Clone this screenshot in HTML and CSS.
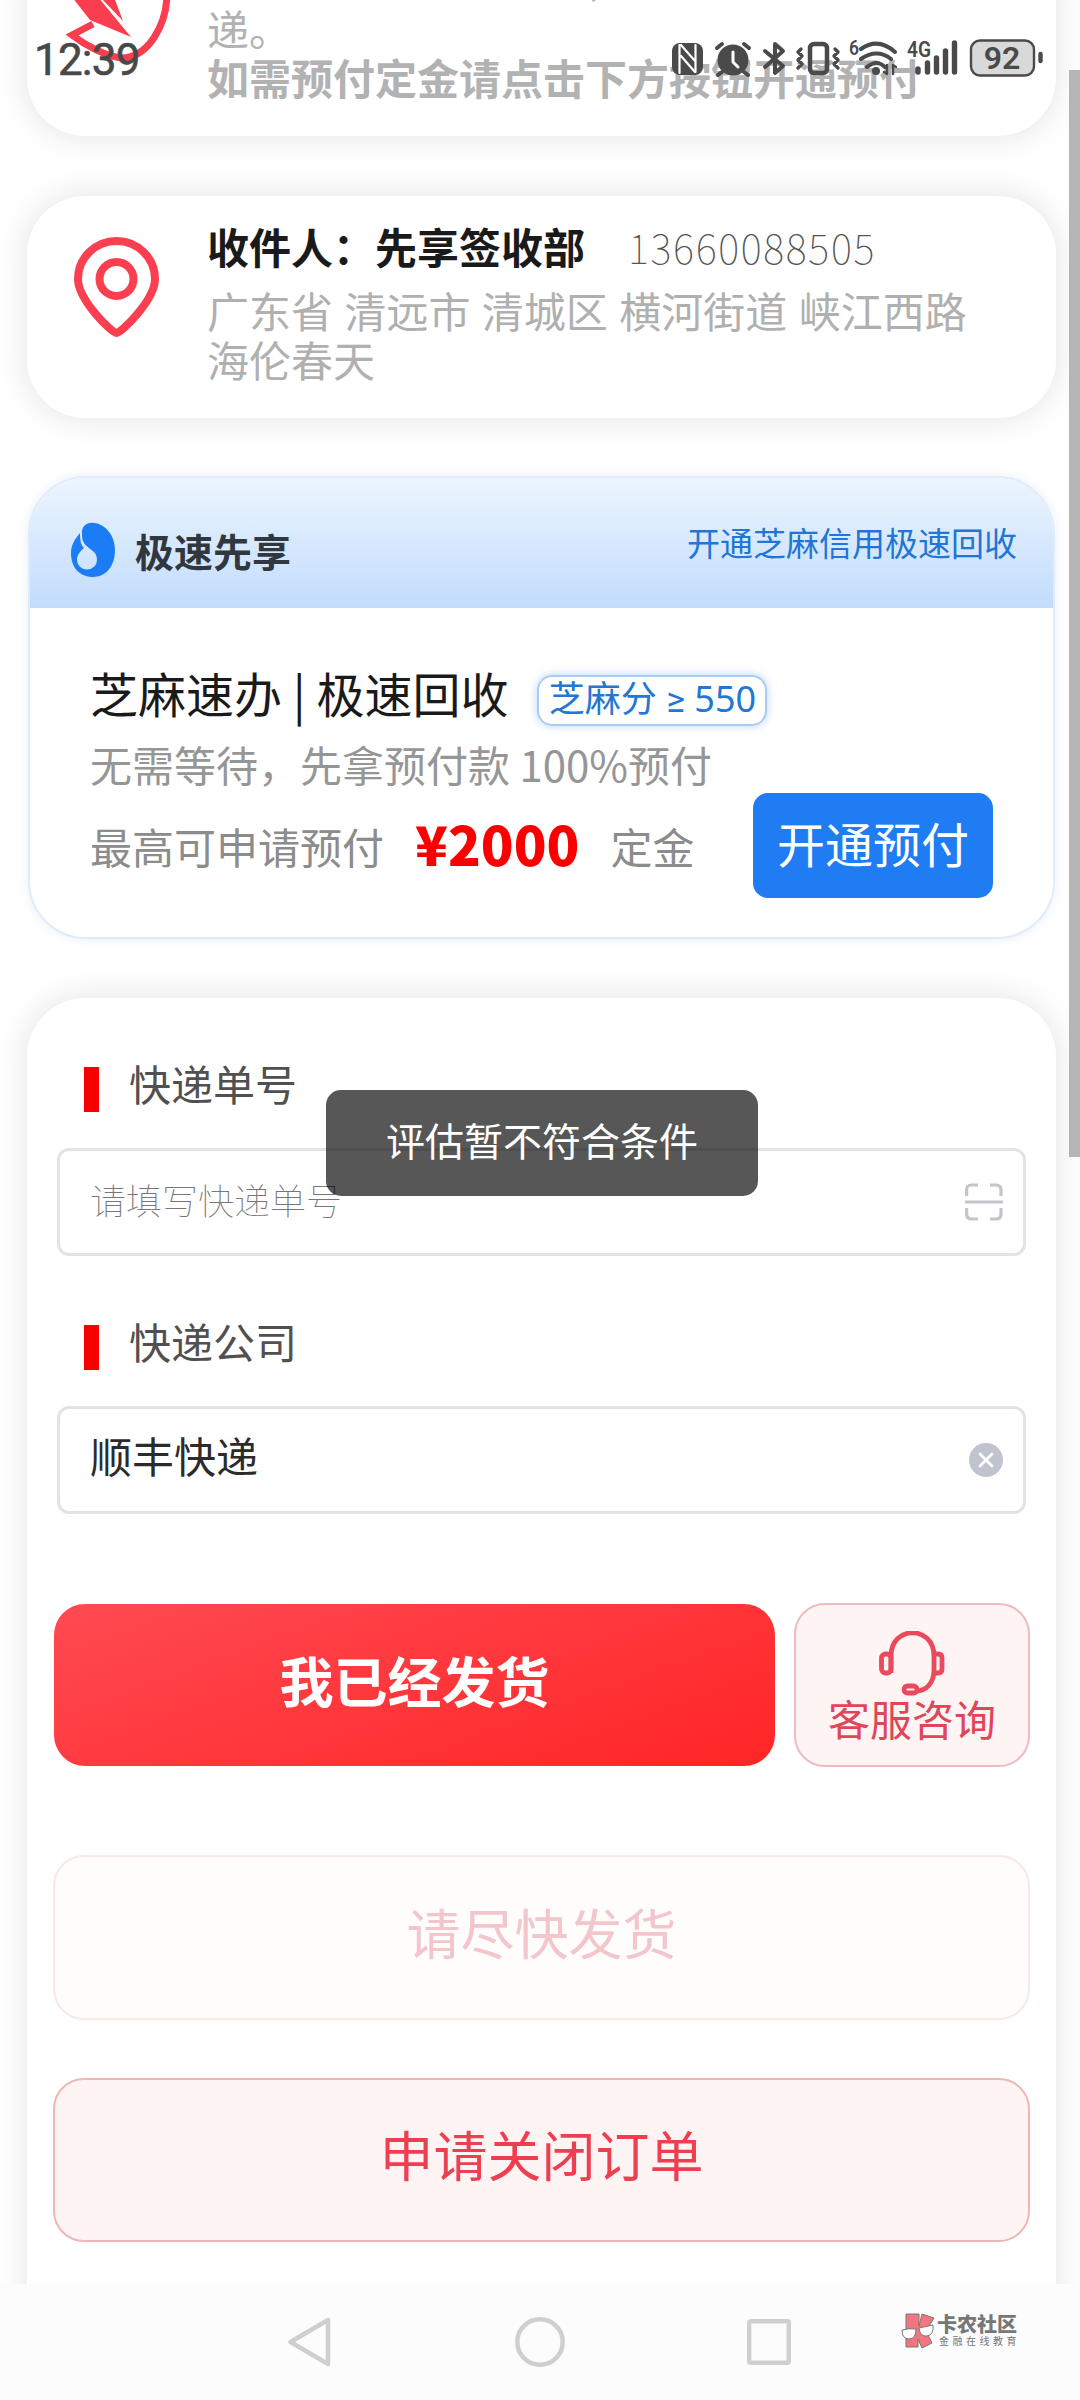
FILE: index.html
```html
<!DOCTYPE html>
<html lang="zh-CN">
<head>
<meta charset="utf-8">
<title>订单发货</title>
<link rel="stylesheet" href="styles.css">
</head>
<body>
<div class="screen">
  <header class="status">
    <span class="clock">12:39</span>
    <svg class="status-icons" width="372" height="44" viewBox="0 0 372 44" fill="none" stroke="#4a4a4a" stroke-width="4" stroke-linecap="round" stroke-linejoin="round">
      <rect x="1" y="7" width="31" height="32" rx="8" fill="#4a4a4a" stroke="none"/>
      <path d="M8.500 37V9M10 20l14 16M10 9l14 16M24.500 9v27" stroke="#fff" stroke-width="2.2"/>
      <circle cx="62" cy="24" r="15.500" fill="#4a4a4a" stroke="none"/>
      <path d="M62 16v10l5 5" stroke="#fff" stroke-width="3"/>
      <path d="M46 12l5-4M78 12l-5-4M51 36l-4 3M73 36l4 3"/>
      <path d="M94 15l18 15-8 7V8l8 7-18 16"/>
      <rect x="139" y="8" width="17" height="29" rx="4" stroke-width="4.5"/>
      <path d="M130 13l-3 3 4 4-4 4 4 4-4 4M164 13l3 3-4 4 4 4-4 4 4 4" stroke-width="3.4"/>
      <path d="M190 13q17-12 34 3M190 23q16-11 30 0M196 31q10-8 18 0" stroke-width="4"/>
      <circle cx="205" cy="35" r="4" fill="#4a4a4a" stroke="none"/>
      <path d="M216 29v9l-3-2M222 38v-9l3 2" stroke-width="2.4"/>
      <path d="M247 33v3M256.500 27v9M265.500 22v14M274.500 15v21M283.500 7v29" stroke-width="5.4"/>
      <rect x="300" y="4.500" width="63" height="35" rx="9" fill="#d9d9d9" stroke-width="2.400"/>
      <path d="M369.500 18v7" stroke-width="4.400"/>
      <g class="status-text">
        <text x="178" y="19" font-size="21" textLength="10" lengthAdjust="spacingAndGlyphs">6</text>
        <text x="236" y="21" font-size="22" textLength="24" lengthAdjust="spacingAndGlyphs">4G</text>
        <text x="331" y="33" font-size="32" text-anchor="middle">92</text>
      </g>
    </svg>
  </header>

  <main class="page">
    <section class="card notice">
      <svg class="notice-icon" width="110" height="66" viewBox="0 0 110 66" fill="none" stroke="#fa3e50" stroke-width="7">
        <path d="M103-4C102 24 85 58 57 58 42 56 22 46 8 35l21-11"/>
        <path d="M8-3h26L67 37 26 20z" fill="#fa3e50" stroke="none"/>
        <path d="M36-3h14l9 24z" fill="#fa3e50" stroke="none"/>
      </svg>
      <div class="notice-text">
        <p class="comma">，</p>
        <p>递。</p>
        <p><strong>如需预付定金请点击下方按钮开通预付</strong></p>
      </div>
    </section>

    <section class="card address">
      <svg class="pin" width="88" height="104" viewBox="0 0 88 104" fill="none" stroke="#fa4050" stroke-width="8">
        <path d="M43.500 97C39 97 5 64 5 43a38.500 38 0 0 1 77 0C82 64 48 97 43.500 97z"/>
        <circle cx="43.500" cy="43" r="17"/>
      </svg>
      <div>
        <p class="receiver"><strong>收件人：先享签收部</strong><span class="phone">13660088505</span></p>
        <p class="street">广东省 清远市 清城区 横河街道 峡江西路<br>海伦春天</p>
      </div>
    </section>

    <section class="credit">
      <div class="credit-head">
        <svg width="46" height="56" viewBox="0 0 46 56">
          <path d="M12 13C11 4 17 0 24 1c12 1 21 13 21 27 0 16-9 27-22 27S1 46 1 31C1 23 5 17 10 11c0 8 1 12 4 15-6 5-7 9-7 12a10 9.500 0 0 0 20 0c0-8-5-9-8-12-5-4-7-7-7-13z" fill="#1b7cf5"/>
        </svg>
        <strong>极速先享</strong>
        <a>开通芝麻信用极速回收</a>
      </div>
      <div class="credit-body">
        <div class="credit-title">芝麻速办 | 极速回收<span class="badge">芝麻分 <span class="gte">≥</span> 550</span></div>
        <p class="credit-sub">无需等待，先拿预付款 100%预付</p>
        <div class="credit-row">
          <span>最高可申请预付</span><b>¥2000</b><span>定金</span>
          <button class="open">开通预付</button>
        </div>
      </div>
    </section>

    <section class="card form">
      <label class="label">快递单号</label>
      <div class="field">
        <input class="value" placeholder="请填写快递单号">
        <svg width="38" height="38" viewBox="0 0 38 38" fill="none" stroke="#c3c5cb" stroke-width="3.200">
          <path d="M1.600 13V7q0-5 5-5H13M25 2h6q5 0 5 5v6M1.600 25v6q0 5 5 5H13M25 36h6q5 0 5-5v-6M0 19h38"/>
        </svg>
      </div>
      <label class="label">快递公司</label>
      <div class="field">
        <input class="value" value="顺丰快递">
        <svg width="34" height="34" viewBox="0 0 34 34" fill="none" stroke="#fff" stroke-width="2.800" stroke-linecap="round">
          <circle cx="17" cy="17" r="17" fill="#c0c4cf" stroke="none"/>
          <path d="M11 11l12 12M23 11L11 23"/>
        </svg>
      </div>
      <div class="actions">
        <button class="btn sent">我已经发货</button>
        <button class="btn service">
          <svg width="66" height="66" viewBox="0 0 66 66" fill="none" stroke="#ea4a5b" stroke-width="4.800">
            <path d="M12 42V25C12-6 55-6 55 25v14c0 12-7 21-18 21"/>
            <rect x="2.500" y="23" width="9.500" height="19" rx="4"/>
            <path d="M55 23h4q4 0 4 4v11q0 4-4 4h-4"/>
            <rect x="25" y="55" width="13" height="7" rx="3.500"/>
          </svg>
          <span>客服咨询</span>
        </button>
      </div>
      <button class="btn hurry" disabled>请尽快发货</button>
      <button class="btn close">申请关闭订单</button>
    </section>
  </main>

  <nav class="navbar">
    <svg width="44" height="52" viewBox="0 0 44 52"><path d="M41 4v44L3.500 26z" fill="none" stroke="#cfcfcf" stroke-width="4.500" stroke-linejoin="round"/></svg>
    <svg width="50" height="50" viewBox="0 0 50 50"><circle cx="25" cy="25" r="22.700" fill="none" stroke="#cfcfcf" stroke-width="4.500"/></svg>
    <svg width="44" height="46" viewBox="0 0 44 46"><rect x="2.200" y="2.200" width="39.600" height="41.600" rx="1.500" fill="none" stroke="#cfcfcf" stroke-width="4.400"/></svg>
    <div class="mark">
      <svg width="34" height="36" viewBox="0 0 34 36" stroke="#777" stroke-width="1">
        <path d="M5 1h13v12l3-12 12 4-8 13 6 12-10 5-4-9v8H5z" fill="#f27680"/>
        <path d="M1 17q7-2 14-1 0 10-7 10t-7-9zM18 15l14-3q1 10-6 11t-8-8z" fill="#fff"/>
      </svg>
      <div class="mark-text"><b>卡农社区</b><span>金融在线教育</span></div>
    </div>
  </nav>

  <div class="scrollbar"></div>
  <div class="toast">评估暂不符合条件</div>
</div>
</body>
</html>
```
FILE: styles.css
```css
* { box-sizing: border-box; }
body, p { margin: 0; }
body { background: #fefefe; font-family: "Noto Sans CJK SC", sans-serif; font-size: 42px; color: #1a1a1a; }
button, input { font: inherit; border: 0; padding: 0; margin: 0; background: none; }
svg { flex: none; display: block; }

.screen { position: relative; width: 1080px; height: 2400px; overflow: hidden; display: flex; flex-direction: column; }
.page { height: 2284px; overflow: hidden; display: flex; flex-direction: column; padding: 0 24px 0 27px; flex: none; }

/* system status bar floats over the scrolled page */
.status { position: absolute; z-index: 2; top: 36px; left: 34px; right: 37px; display: flex; justify-content: space-between; }
.clock { margin-top: 1px; font: 400 44px/46px Roboto, sans-serif; color: #484848; letter-spacing: -.8px; -webkit-text-stroke: .6px #484848; }
.status-text text { font-family: Roboto, sans-serif; font-weight: 600; fill: #4a4a4a; stroke: none; }

.card { flex: none; background: #fff; border-radius: 58px; box-shadow: 0 0 30px rgba(0, 0, 0, .11); }

.notice { margin-top: -60px; height: 196px; padding: 14px 0 0 37px; display: flex; gap: 33px; color: #b2b2b2; line-height: 49px; white-space: nowrap; }
.notice-icon { margin-top: 46px; overflow: visible; }
.comma { padding-left: 379px; }

.address { margin-top: 60px; height: 222px; padding: 25px 0 0 46px; display: flex; gap: 46px; white-space: nowrap; }
.pin { margin-top: 15px; }
.receiver { line-height: 50px; }
.phone { margin-left: 43px; font-size: 40px; font-weight: 100; letter-spacing: 1.7px; color: #555; }
.street { margin-top: 13px; line-height: 49px; color: #b0b0b0; word-spacing: 2px; }

.credit { flex: none; margin: 58px 0 0 1px; width: 1027px; height: 463px; border: 2px solid #e1ecfa; border-radius: 58px; overflow: hidden; background: #fff; box-shadow: 0 0 8px rgba(60, 140, 240, .12); }
.credit-head { height: 130px; padding: 14px 36px 0 40px; display: flex; align-items: center; background: linear-gradient(#ecf5ff, #c2dcfc); }
.credit-head strong { margin-left: 19px; font-size: 39px; color: #30373f; line-height: 60px; }
.credit-head a { margin: -16px 0 0 auto; font-size: 33px; line-height: 50px; color: #2175d4; }
.credit-body { padding: 54px 60px 0; }
.credit-title { height: 63px; display: flex; align-items: center; font-size: 48px; line-height: 56px; padding-bottom: 3px; }
.badge { margin: 17px 0 0 29px; height: 51px; width: 230px; border-radius: 15px; border: 2px solid #a9cbf5; box-shadow: 0 0 8px rgba(50, 130, 240, .35); font-family: "Noto Sans", "Noto Sans CJK SC", sans-serif; font-size: 36px; line-height: 43px; text-align: center; color: #2377d3; white-space: nowrap; }
.gte { font-family: Roboto, sans-serif; }
.credit-sub { margin-top: 14px; line-height: 50px; color: #969696; white-space: nowrap; }
.credit-row { margin-top: 4px; height: 105px; display: flex; align-items: center; color: #8c8c8c; white-space: nowrap; }
.credit-row b { margin: -5px 31px 0; font-size: 54px; font-weight: 900; line-height: 80px; color: #fb0000; }
.open { margin-left: auto; width: 240px; height: 105px; padding-bottom: 8px; border-radius: 15px; background: #1f7cf3; color: #fff; font-size: 48px; }

.form { margin-top: 59px; height: 1400px; padding: 69px 26px 0; display: flex; flex-direction: column; }
.label { flex: none; margin-left: 31px; height: 45px; padding-left: 30px; border-left: 15px solid #f90000; line-height: 32px; color: #505050; }
.field { flex: none; margin: 36px 0 69px 4px; width: 969px; height: 108px; padding: 0 20px 0 30px; border: 3px solid #e3e3e3; border-radius: 12px; display: flex; align-items: center; }
.value { flex: 1; height: 60px; padding-bottom: 3px; margin-top: -8px; color: #2b2b2b; outline: 0; }
.value::placeholder { font-size: 36px; font-weight: 100; color: #777; opacity: 1; }
.actions { flex: none; height: 164px; margin: 20px 0 88px 1px; display: flex; align-items: center; gap: 19px; }
.btn { flex: none; width: 977px; height: 165px; border-radius: 31px; font-size: 54px; padding-bottom: 12px; }
.sent { width: 721px; height: 162px; background: linear-gradient(160deg, #ff4a52, #ff2526); color: #fff; font-weight: 700; padding-bottom: 11px; }
.service { width: 236px; height: 164px; padding: 26px 0 0; display: flex; flex-direction: column; align-items: center; border: 2px solid #eebcbc; background: #fff4f4; color: #df4658; font-size: 42px; line-height: 42px; }
.hurry { border: 2px solid #f8e8e9; background: #fefdfc; color: #f3c6cc; }
.close { height: 164px; margin-top: 58px; border: 2px solid #efb6b6; background: #fff4f4; color: #ee3f50; padding-bottom: 14px; }

.navbar { flex: none; height: 116px; padding-left: 287px; background: #fcfcfc; display: flex; align-items: center; }
.navbar svg:nth-child(2) { margin: 0 182px 0 184px; }
.mark { margin: -22px 0 0 110px; display: flex; gap: 2px; color: #777; }
.mark-text { display: flex; flex-direction: column; white-space: nowrap; }
.mark-text b { font-size: 20px; line-height: 21px; font-weight: 900; }
.mark-text span { padding-left: 2px; font-size: 10px; line-height: 13px; letter-spacing: 3.500px; }

.scrollbar { position: absolute; right: 0; top: 70px; width: 11px; height: 1087px; background: #b5b5b5; }
.toast { position: absolute; left: 326px; top: 1090px; width: 432px; height: 106px; border-radius: 15px; background: rgba(0, 0, 0, .66); color: #fff; font-size: 39px; line-height: 98px; text-align: center; }
```
